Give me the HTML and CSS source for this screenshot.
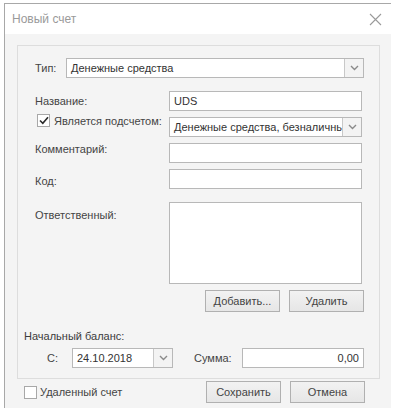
FILE: index.html
```html
<!DOCTYPE html>
<html lang="ru">
<head>
    <meta charset="UTF-8">
    <title>Новый счет</title>
    <link rel="stylesheet" href="styles.css">
</head>
<body>

<div class="window">
    <div class="titlebar">
        <span class="title">Новый счет</span>
        <svg class="close" width="13" height="13" viewBox="0 0 13 13">
            <path d="M1 1 L12 12 M12 1 L1 12" stroke="#9a9a9a" stroke-width="1.1" fill="none"/>
        </svg>
    </div>

    <div class="content">
        <div class="group">
            <div class="type-row">
                <span class="label">Тип:</span>
                <div class="select type-select">
                    <span class="select-text">Денежные средства</span>
                    <span class="arrow"><svg width="9" height="6" viewBox="0 0 9 6"><path d="M1 1 L4.5 4.5 L8 1" stroke="#8a8a8a" stroke-width="1.4" fill="none"/></svg></span>
                </div>
            </div>

            <div class="form">
                <span class="label lbl-name">Название:</span>
                <div class="input">UDS</div>

                <label class="label lbl-sub">
                    <span class="checkbox"><svg width="10" height="9" viewBox="0 0 10 9"><path d="M1 4.5 L3.8 7.3 L9 1.2" stroke="#2a2a2a" stroke-width="1.6" fill="none"/></svg></span>
                    Является подсчетом:
                </label>
                <div class="select">
                    <span class="select-text">Денежные средства, безналичнь</span>
                    <span class="arrow"><svg width="9" height="6" viewBox="0 0 9 6"><path d="M1 1 L4.5 4.5 L8 1" stroke="#8a8a8a" stroke-width="1.4" fill="none"/></svg></span>
                </div>

                <span class="label lbl-comment">Комментарий:</span>
                <div class="input"></div>

                <span class="label lbl-code">Код:</span>
                <div class="input"></div>

                <span class="label lbl-resp">Ответственный:</span>
                <div class="input textarea"></div>
            </div>

            <div class="actions">
                <button class="btn">Добавить...</button>
                <button class="btn">Удалить</button>
            </div>

            <div class="balance-title">Начальный баланс:</div>
            <div class="balance-row">
                <span class="label lbl-from">С:</span>
                <div class="select date-select">
                    <span class="select-text">24.10.2018</span>
                    <span class="arrow"><svg width="9" height="6" viewBox="0 0 9 6"><path d="M1 1 L4.5 4.5 L8 1" stroke="#8a8a8a" stroke-width="1.4" fill="none"/></svg></span>
                </div>
                <span class="label lbl-sum">Сумма:</span>
                <div class="input sum">0,00</div>
            </div>
        </div>

        <div class="footer">
            <label class="deleted">
                <span class="checkbox"></span>
                Удаленный счет
            </label>
            <div class="footer-buttons">
                <button class="btn">Сохранить</button>
                <button class="btn">Отмена</button>
            </div>
        </div>
    </div>
</div>

</body>
</html>
```

FILE: styles.css
```css
body {
    margin: 0;
    background: #fff;
    font-family: "Liberation Sans", Arial, sans-serif;
    font-size: 11px;
    color: #3c3c3c;
}
.window {
    margin: 3px 0 0 4px;
    width: 386px;
    border-top: 1px solid #a8a8a8;
    border-left: 1px solid #a8a8a8;
}
.titlebar {
    height: 30px;
    display: flex;
    align-items: center;
    justify-content: space-between;
    padding: 0 9px 0 7px;
    background: #fff;
}
.title {
    font-size: 12px;
    color: #9a9a9a;
}
.close {
    margin-top: 1px;
}
.content {
    background: #f4f4f4;
    padding: 11px 11px 5px 12px;
}
.group {
    border: 1px solid #dddddd;
    padding: 12px 15px 10px 6px;
}
.label {
    color: #444;
}
.type-row {
    display: flex;
    align-items: center;
    padding-left: 11px;
}
.type-row .label {
    width: 31px;
}
.select {
    display: flex;
    height: 20px;
    box-sizing: border-box;
    border: 1px solid #b8b8b8;
    background: #fff;
}
.type-select {
    flex: 1;
}
.select-text {
    flex: 1;
    padding: 0 4px;
    line-height: 19px;
    white-space: nowrap;
    overflow: hidden;
    color: #333;
}
.arrow {
    width: 18px;
    border-left: 1px solid #c8c8c8;
    background: #f3f3f3;
    display: flex;
    align-items: center;
    justify-content: center;
}
.form {
    display: grid;
    grid-template-columns: 134px 193px;
    row-gap: 6px;
    margin-top: 13px;
    padding-left: 11px;
}
.input {
    height: 20px;
    box-sizing: border-box;
    border: 1px solid #b8b8b8;
    background: #fff;
    padding: 0 4px;
    line-height: 18px;
    color: #333;
}
.textarea {
    height: 82px;
    margin-top: 7px;
}
.lbl-name {
    align-self: center;
}
.lbl-sub {
    display: flex;
    align-items: center;
    gap: 4px;
    margin-left: 2px;
    margin-top: -3px;
    align-self: start;
}
.lbl-code {
    align-self: center;
    margin-top: 3px;
}
.lbl-resp {
    margin-top: 14px;
}
.checkbox {
    width: 13px;
    height: 13px;
    box-sizing: border-box;
    border: 1px solid #a8a8a8;
    background: #fff;
    display: inline-flex;
    align-items: center;
    justify-content: center;
}
.actions,
.footer-buttons {
    display: flex;
    justify-content: flex-end;
    gap: 9px;
}
.actions {
    margin-top: 6px;
}
.btn {
    width: 75px;
    height: 22px;
    font-family: inherit;
    font-size: 11px;
    color: #444;
    background: linear-gradient(#f2f2f2, #e6e6e6);
    border: 1px solid #b0b0b0;
    padding: 0;
}
.balance-title {
    margin-top: 18px;
}
.balance-row {
    display: flex;
    align-items: center;
    margin-top: 6px;
    padding-left: 23px;
}
.lbl-from {
    width: 25px;
}
.date-select {
    width: 101px;
}
.lbl-sum {
    margin-left: 21px;
    width: 48px;
}
.sum {
    flex: 1;
    text-align: right;
}
.footer {
    display: flex;
    align-items: center;
    justify-content: space-between;
    padding: 2px 15px 0 7px;
}
.deleted {
    display: flex;
    align-items: center;
    gap: 3px;
    color: #444;
}
```
